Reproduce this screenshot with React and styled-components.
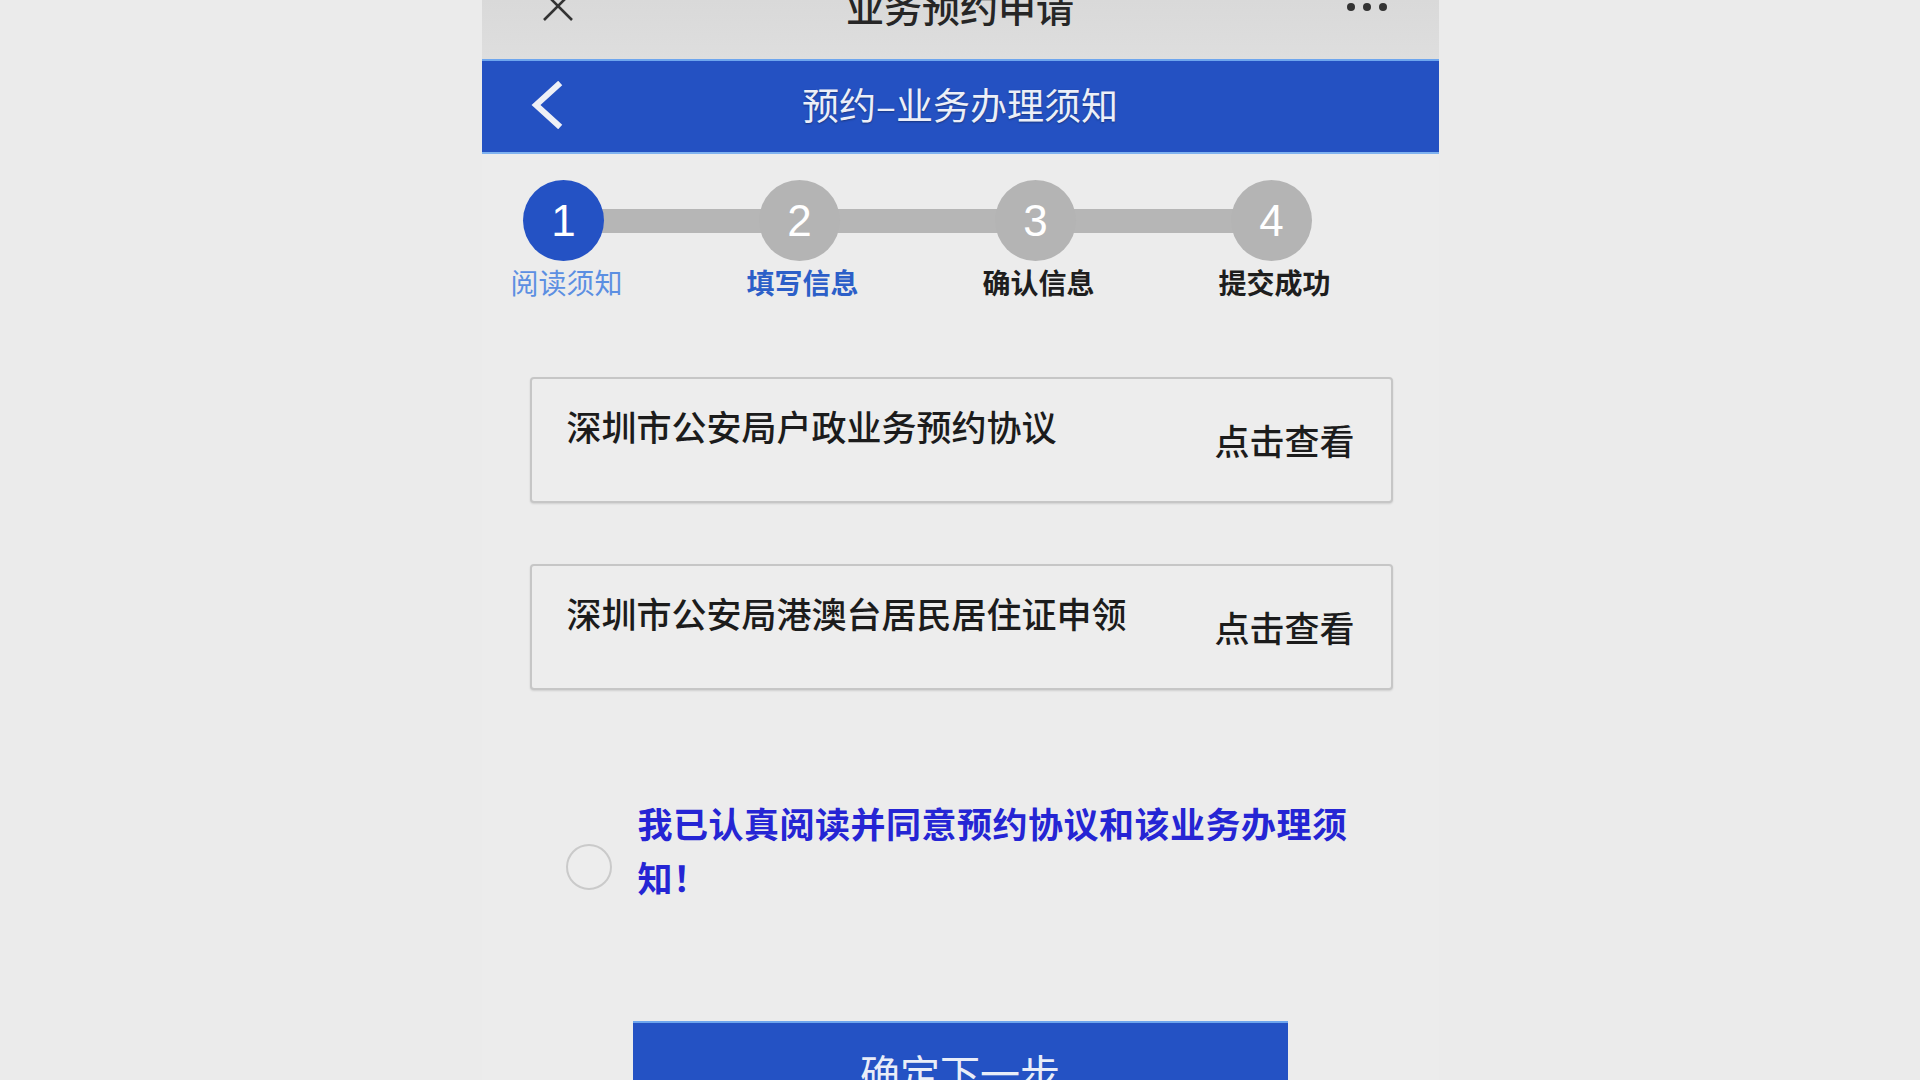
import React from "react";
import styled, { createGlobalStyle } from "styled-components";

const GlobalStyle = createGlobalStyle`
  html, body {
    margin: 0;
    padding: 0;
    background: #ebebeb;
    overflow: hidden;
  }
  body {
    font-family: "Noto Sans CJK SC", "Noto Sans", "Liberation Sans", sans-serif;
  }
`;

const steps = [
  { num: 1, label: "阅读须知", state: "active" },
  { num: 2, label: "填写信息", state: "next" },
  { num: 3, label: "确认信息", state: "todo" },
  { num: 4, label: "提交成功", state: "todo" },
];

const docs = ["深圳市公安局户政业务预约协议", "深圳市公安局港澳台居民居住证申领"];

const App = () => {
  return (
    <>
      <GlobalStyle />
      <Phone>
        <TopBar>
          <CloseIcon viewBox="0 0 34 34">
            <path d="M3 3 L31 31 M31 3 L3 31" />
          </CloseIcon>
          <TopTitle>业务预约申请</TopTitle>
          <Dots>
            <Dot />
            <Dot />
            <Dot />
          </Dots>
        </TopBar>

        <Header>
          <BackIcon viewBox="0 0 34 48">
            <path d="M29 4 L7 24 L29 44" />
          </BackIcon>
          <HeaderTitle>预约–业务办理须知</HeaderTitle>
        </Header>

        <Steps>
          {steps.map((s) => (
            <Step key={s.num}>
              <Circle state={s.state}>{s.num}</Circle>
              <StepLabel state={s.state}>{s.label}</StepLabel>
            </Step>
          ))}
        </Steps>

        <Cards>
          {docs.map((d) => (
            <Card key={d}>
              <CardTitle>{d}</CardTitle>
              <CardLink>点击查看</CardLink>
            </Card>
          ))}
        </Cards>

        <Agree>
          <Radio />
          <AgreeText>我已认真阅读并同意预约协议和该业务办理须知！</AgreeText>
        </Agree>

        <NextButton>确定下一步</NextButton>
      </Phone>
    </>
  );
};

const Phone = styled.div`
  width: 957px;
  margin: 0 auto;
  min-height: 100vh;
  display: flex;
  flex-direction: column;
  background: #ececec;
`;

const TopBar = styled.div`
  position: relative;
  height: 59px;
  flex: 0 0 59px;
  background: linear-gradient(#d9d9d9, #dedede);
  display: flex;
  justify-content: center;
  align-items: flex-start;
  overflow: hidden;
`;

const TopTitle = styled.div`
  margin-top: -14px;
  font-size: 38px;
  line-height: 40px;
  color: #262626;
  font-weight: 500;
`;

const CloseIcon = styled.svg`
  position: absolute;
  left: 59px;
  top: -11px;
  width: 34px;
  height: 34px;
  fill: none;
  stroke: #333;
  stroke-width: 2.6;
`;

const Dots = styled.div`
  position: absolute;
  right: 52px;
  top: 3px;
  display: flex;
  gap: 8px;
`;

const Dot = styled.span`
  width: 8px;
  height: 8px;
  border-radius: 50%;
  background: #333;
`;

const Header = styled.div`
  position: relative;
  height: 95px;
  flex: 0 0 95px;
  box-sizing: border-box;
  background: #2451c2;
  border-top: 2px solid #6ea6ee;
  border-bottom: 2px solid #7fb2f0;
  display: flex;
  align-items: center;
  justify-content: center;
  padding-bottom: 6px;
`;

const BackIcon = styled.svg`
  position: absolute;
  left: 47px;
  top: 20px;
  width: 34px;
  height: 48px;
  fill: none;
  stroke: #eef0f6;
  stroke-width: 6;
  stroke-linecap: square;
`;

const HeaderTitle = styled.div`
  font-size: 37px;
  line-height: 40px;
  color: #eceff8;
  text-shadow: 0 1px 2px rgba(0, 0, 0, 0.35);
`;

const Steps = styled.div`
  position: relative;
  display: flex;
  justify-content: space-between;
  padding: 26px 111px 0 26px;

  &::before {
    content: "";
    position: absolute;
    left: 82px;
    right: 167px;
    top: 55px;
    height: 24px;
    background: #b6b6b6;
  }
`;

const Step = styled.div`
  position: relative;
  width: 112px;
  display: flex;
  flex-direction: column;
  align-items: center;
`;

const Circle = styled.div`
  width: 81px;
  height: 81px;
  border-radius: 50%;
  background: ${({ state }) => (state === "active" ? "#2452c4" : "#b4b4b4")};
  color: #fff;
  font-family: "Liberation Sans", Arial, sans-serif;
  font-size: 44px;
  display: flex;
  align-items: center;
  justify-content: center;
`;

const labelColors = {
  active: "#5c8fe2",
  next: "#2c5fc8",
  todo: "#1e1e1e",
};

const StepLabel = styled.div`
  margin-top: 5px;
  margin-left: 6px;
  font-size: 28px;
  line-height: 32px;
  white-space: nowrap;
  color: ${({ state }) => labelColors[state]};
  font-weight: ${({ state }) => (state === "active" ? 400 : 700)};
`;

const Cards = styled.div`
  display: flex;
  flex-direction: column;
  gap: 61px;
  padding: 79px 46px 0 48px;
`;

const Card = styled.div`
  height: 126px;
  box-sizing: border-box;
  border: 2px solid #c6c6c6;
  border-radius: 4px;
  background: #ededed;
  box-shadow: 0 1px 2px rgba(0, 0, 0, 0.12);
  display: flex;
  align-items: center;
  justify-content: space-between;
  padding: 0 36px 0 35px;
`;

const CardTitle = styled.div`
  align-self: flex-start;
  margin-top: 27px;
  font-size: 35px;
  line-height: 40px;
  color: #1c1c1c;
  font-weight: 500;
`;

const CardLink = styled.div`
  font-size: 35px;
  line-height: 40px;
  color: #1c1c1c;
  font-weight: 500;
`;

const Agree = styled.div`
  display: flex;
  align-items: flex-start;
  gap: 26px;
  margin-top: 106px;
  padding-left: 84px;
`;

const Radio = styled.div`
  flex: 0 0 auto;
  margin-top: 48px;
  width: 42px;
  height: 42px;
  border-radius: 50%;
  border: 2px solid #cacaca;
  background: #ededed;
`;

const AgreeText = styled.div`
  width: 730px;
  font-size: 35px;
  line-height: 54px;
  letter-spacing: 0.5px;
  font-weight: 700;
  color: #2525d4;
`;

const NextButton = styled.div`
  align-self: center;
  margin-top: 117px;
  width: 655px;
  height: 100px;
  flex: 0 0 100px;
  box-sizing: border-box;
  background: #2452c4;
  border-top: 2px solid #6ea6ee;
  color: #e9edf8;
  font-size: 40px;
  display: flex;
  align-items: center;
  justify-content: center;
`;

export default App;
